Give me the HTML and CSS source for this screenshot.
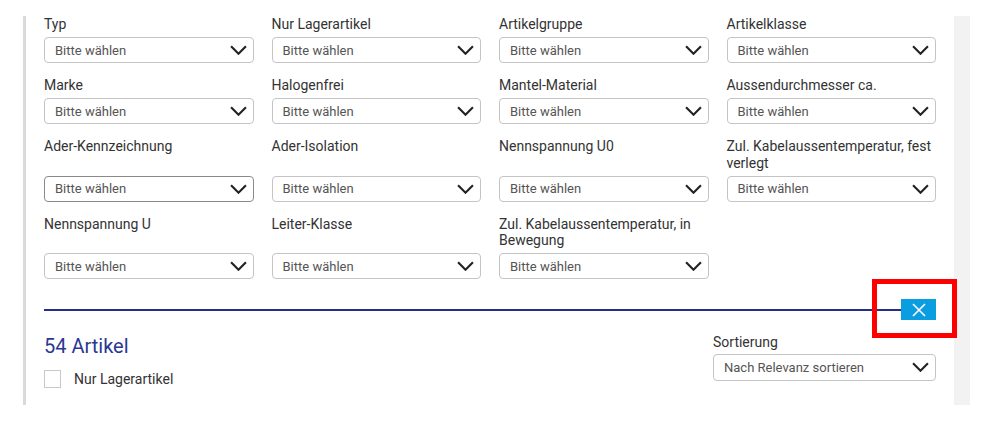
FILE: index.html
```html
<!DOCTYPE html>
<html lang="de">
  <head>
    <meta charset="UTF-8" />
    <meta name="viewport" content="width=device-width, initial-scale=1.0" />
    <title>Filter</title>
    <link rel="stylesheet" href="styles.css">
  </head>
  <body>
    <div class="page">
      <div class="panel">
        <div class="filters">
          <div class="field"><label>Typ</label><div class="select">Bitte wählen<svg viewBox="0 0 16 9"><path d="M1 1l7 7 7-7"/></svg></div></div>
          <div class="field"><label>Nur Lagerartikel</label><div class="select">Bitte wählen<svg viewBox="0 0 16 9"><path d="M1 1l7 7 7-7"/></svg></div></div>
          <div class="field"><label>Artikelgruppe</label><div class="select">Bitte wählen<svg viewBox="0 0 16 9"><path d="M1 1l7 7 7-7"/></svg></div></div>
          <div class="field"><label>Artikelklasse</label><div class="select">Bitte wählen<svg viewBox="0 0 16 9"><path d="M1 1l7 7 7-7"/></svg></div></div>

          <div class="field"><label>Marke</label><div class="select">Bitte wählen<svg viewBox="0 0 16 9"><path d="M1 1l7 7 7-7"/></svg></div></div>
          <div class="field"><label>Halogenfrei</label><div class="select">Bitte wählen<svg viewBox="0 0 16 9"><path d="M1 1l7 7 7-7"/></svg></div></div>
          <div class="field"><label>Mantel-Material</label><div class="select">Bitte wählen<svg viewBox="0 0 16 9"><path d="M1 1l7 7 7-7"/></svg></div></div>
          <div class="field"><label>Aussendurchmesser ca.</label><div class="select">Bitte wählen<svg viewBox="0 0 16 9"><path d="M1 1l7 7 7-7"/></svg></div></div>

          <div class="field"><label>Ader-Kennzeichnung</label><div class="select focus">Bitte wählen<svg viewBox="0 0 16 9"><path d="M1 1l7 7 7-7"/></svg></div></div>
          <div class="field"><label>Ader-Isolation</label><div class="select">Bitte wählen<svg viewBox="0 0 16 9"><path d="M1 1l7 7 7-7"/></svg></div></div>
          <div class="field"><label>Nennspannung U0</label><div class="select">Bitte wählen<svg viewBox="0 0 16 9"><path d="M1 1l7 7 7-7"/></svg></div></div>
          <div class="field"><label>Zul. Kabelaussentemperatur, fest verlegt</label><div class="select">Bitte wählen<svg viewBox="0 0 16 9"><path d="M1 1l7 7 7-7"/></svg></div></div>

          <div class="field"><label>Nennspannung U</label><div class="select">Bitte wählen<svg viewBox="0 0 16 9"><path d="M1 1l7 7 7-7"/></svg></div></div>
          <div class="field"><label>Leiter-Klasse</label><div class="select">Bitte wählen<svg viewBox="0 0 16 9"><path d="M1 1l7 7 7-7"/></svg></div></div>
          <div class="field"><label>Zul. Kabelaussentemperatur, in Bewegung</label><div class="select">Bitte wählen<svg viewBox="0 0 16 9"><path d="M1 1l7 7 7-7"/></svg></div></div>
        </div>

        <div class="divider">
          <div class="line"></div>
          <button class="close">
            <svg viewBox="0 0 14 14"><path d="M1 1l12 12M13 1L1 13"/></svg>
          </button>
          <div class="highlight"></div>
        </div>

        <div class="results">
          <div>
            <div class="count">54 Artikel</div>
            <div class="check"><span class="box"></span>Nur Lagerartikel</div>
          </div>
          <div class="sort">
            <label>Sortierung</label>
            <div class="select tall">Nach Relevanz sortieren<svg viewBox="0 0 16 9"><path d="M1 1l7 7 7-7"/></svg></div>
          </div>
        </div>
      </div>
      <div class="side"></div>
    </div>
  </body>
</html>
```

FILE: styles.css
```css
body {
  margin: 0;
  background: #fff;
  font-family: Roboto, "Liberation Sans", Arial, sans-serif;
  color: #333;
}
.page {
  display: flex;
  padding: 16px 0 0 23px;
  width: 947px;
}
.panel {
  flex: 1;
  border-left: 3px solid #dadada;
  padding: 0 18px 16px 18px;
  height: 373px;
}
.side {
  width: 16px;
  height: 389px;
  background: #f2f2f2;
}
.filters {
  display: grid;
  grid-template-columns: repeat(4, 1fr);
  column-gap: 18px;
  row-gap: 14px;
}
.field {
  display: flex;
  flex-direction: column;
  justify-content: space-between;
}
label {
  display: block;
  font-size: 14px;
  line-height: 16.5px;
  color: #333;
  margin-bottom: 4.5px;
}
.select {
  display: flex;
  align-items: center;
  justify-content: space-between;
  height: 26px;
  box-sizing: border-box;
  border: 1px solid #c4c4c4;
  border-radius: 4px;
  padding: 0 6px 0 10px;
  font-size: 13px;
  color: #555;
}
.select.focus {
  border-color: #8a8a8a;
}
.select.tall {
  height: 27px;
}
.select svg {
  width: 17px;
  height: 10px;
  fill: none;
  stroke: #222;
  stroke-width: 2;
}
.divider {
  position: relative;
  display: flex;
  align-items: center;
  margin-top: 20px;
}
.line {
  flex: 1;
  height: 2px;
  background: #222f8c;
}
.close {
  width: 35px;
  height: 21px;
  border: none;
  padding: 0;
  background: #0a9de0;
  display: flex;
  align-items: center;
  justify-content: center;
}
.close svg {
  width: 14px;
  height: 14px;
  stroke: #fff;
  stroke-width: 1.6;
}
.highlight {
  position: absolute;
  right: -21px;
  top: -20px;
  width: 75px;
  height: 49px;
  border: 5px solid #f00;
}
.results {
  display: flex;
  justify-content: space-between;
  margin-top: 14px;
}
.count {
  font-size: 20px;
  line-height: 24px;
  color: #2b3893;
}
.check {
  display: flex;
  align-items: center;
  margin-top: 12px;
  font-size: 14px;
  color: #333;
}
.box {
  width: 15px;
  height: 16px;
  border: 1px solid #c8c8c8;
  margin-right: 13px;
}
.sort {
  width: 223px;
}
.sort label {
  margin-bottom: 3px;
}
```
